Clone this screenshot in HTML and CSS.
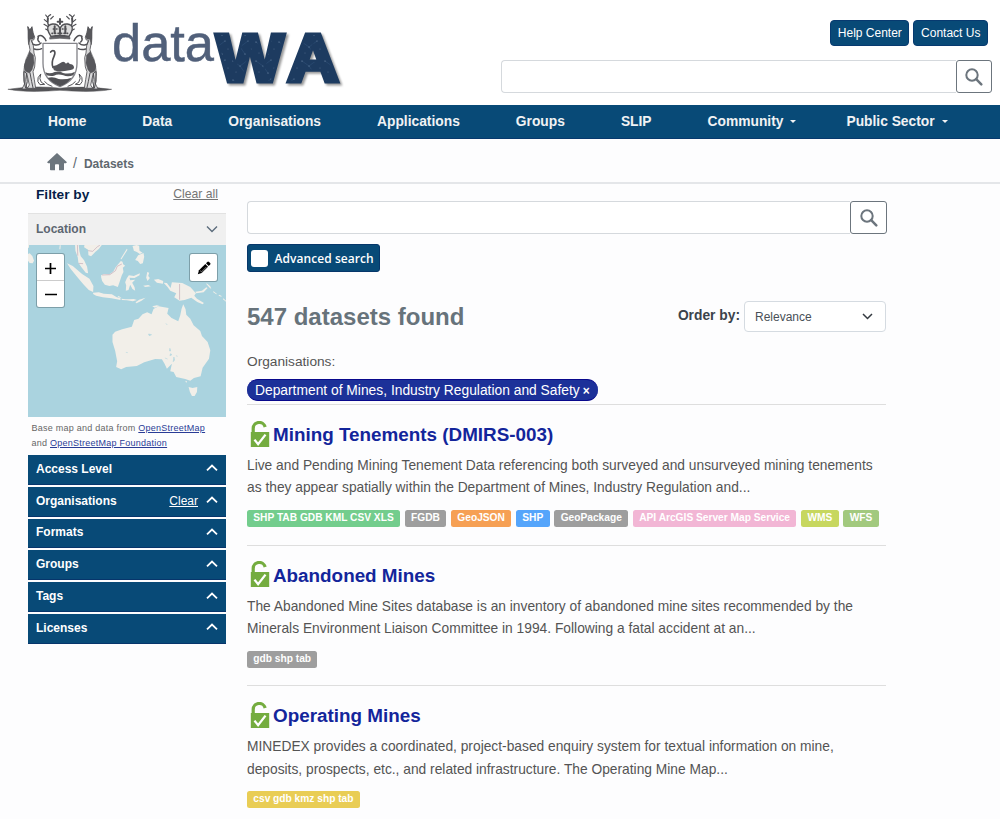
FILE: index.html
```html
<!DOCTYPE html>
<html lang="en">
<head>
<meta charset="utf-8">
<title>Datasets - data WA</title>
<link rel="stylesheet" href="styles.css">
</head>
<body>
<svg class="defs" width="0" height="0" aria-hidden="true">
  <symbol id="search" viewBox="0 0 18 18"><circle cx="7" cy="7" r="5.7" fill="none" stroke="#6c757d" stroke-width="2"/><path d="M11.2 11.2L16.3 16.3" stroke="#6c757d" stroke-width="2.5" stroke-linecap="round"/></symbol>
  <symbol id="up" viewBox="0 0 12 8"><path d="M1 6.3L6 1.6L11 6.3" fill="none" stroke="#fff" stroke-width="1.8"/></symbol>
  <symbol id="lock" viewBox="0 0 20 27"><path d="M3.2 11V7.400A6.100 6.100 0 0 1 15.200 6" fill="none" stroke="#74ac3f" stroke-width="3.2"/><path d="M.8 11h18.400v15H.8z" fill="#74ac3f"/><path d="M4.500 18.600l3.600 4.600 7.400-9.600" fill="none" stroke="#fff" stroke-width="2.300"/></symbol>
</svg>

<header class="header">
  <svg class="logo" width="350" height="105" viewBox="0 0 350 105">
    <defs>
      <pattern id="stars" width="23" height="19" patternUnits="userSpaceOnUse">
        <rect width="23" height="19" fill="#1d3b60"/>
        <path d="M3 4l7 5 8-6M10 9l5 7" stroke="#30537a" stroke-width=".5" fill="none"/>
        <g fill="#7890ad"><circle cx="3" cy="4" r=".6"/><circle cx="10" cy="9" r=".5"/><circle cx="18" cy="3" r=".5"/><circle cx="15" cy="16" r=".6"/><circle cx="6" cy="15" r=".4"/><circle cx="21" cy="11" r=".4"/></g>
      </pattern>
    </defs>
    <g transform="translate(0 5) scale(.3333)" stroke="#505054" fill="none" stroke-linejoin="round" stroke-linecap="round" stroke-width="4">
      <path d="M25 253Q90 243 150 247Q180 252 210 247Q270 243 335 253Q290 262 215 258Q180 254 145 258Q70 262 25 253z" fill="#555558" stroke-width="1.500"/>
      <g id="roo">
        <path d="M84 66l6 10 6-11 3 18 5 14-3 8-7 1 6 16 2 22 4 14-2 28-5 14 4 24 4 26H82l6-10-8-36-3 20 3 28H66l8-16-3-30 3-28 12-24 4-20-4-22 2-17z" fill="#d9d9da" stroke-width="2.500"/>
        <path d="M84 66l5 10 6-9 5 20 3 9-4 6-9 1-4 16-2-18zM89 140l11 10 2 24-6 20-8 10-12-5-3-14 4-20z" fill="#58585c" stroke-width="1.500"/>
        <path d="M73 200l6 4 3 26-5 20-5-20zM90 204l5 26 4 18M95 108l5 12" stroke-width="3"/>
        <path d="M101 118q12 6 22-4M103 132q12 4 22-1M114 94q8-5 15 1t9 12M115 96q-4 9 3 15" stroke-width="4.500"/>
        <path d="M122 208q-6 14 2 24l10 6-14 1q-10-8-6-20zM134 230q8 10 22 14" stroke-width="3"/>
        <path d="M137 30l8 10-1 14M133 44l10 8 5 14M132 58l14 8 7 12M152 29q-10 4-10 16 0 18 14 30M137 72l14 8M160 34l-8 8" stroke-width="3.500"/>
      </g>
      <use href="#roo" transform="translate(360 0) scale(-1 1)"/>
      <path d="M129 115H231V175Q231 225 180 245Q129 225 129 175z" fill="#fff" stroke="#85858a" stroke-width="4"/>
      <path d="M136 202q14 6 28-1 14-4 25 3 20 5 36-4l-5 11q-17 6-30 0-16-5-28 1-10 2-22-1z" fill="#555559" stroke="none"/>
      <path d="M143 219q16-5 33 3 20 3 39-4-10 16-35 26-24-10-37-25z" fill="#505054" stroke="none"/>
      <path d="M152 141q5-7 11-3 4 5-1 16-9 19-3 33" stroke-width="5"/>
      <path d="M157 184q13-2 23-9 11-10 18 1 8-8 11 1 11 0 13 9 1 7-10 9-36 8-50 1z" fill="#55555a" stroke="none"/>
      <path d="M151 95q29-6 58 0l1 7q-30-5-60 0z" fill="#626266" stroke-width="2"/>
      <path d="M153 94q-22-33 5-37 17-1 22 14 5-15 22-14 27 4 5 37-27-5-54 0z" fill="#ddd" stroke-width="4"/>
      <path d="M180 42v15M173 50h14M164 64v21M196 64v21M180 71v16" stroke-width="6"/>
      <path d="M156 85h48M160 72h40" stroke-width="5" stroke-dasharray="2 7"/>
    </g>
    <text class="logo-data" x="112" y="61" textLength="102" lengthAdjust="spacingAndGlyphs">data</text>
    <g class="logo-wa">
      <text x="216.500" y="80.500" textLength="67" lengthAdjust="spacingAndGlyphs">W</text>
      <text x="287.500" y="80.500" textLength="51" lengthAdjust="spacingAndGlyphs">A</text>
    </g>
  </svg>
  <div class="header-right">
    <div class="header-links"><a class="btn">Help Center</a><a class="btn">Contact Us</a></div>
    <div class="search"><div class="field"></div><div class="go"><svg width="18" height="18"><use href="#search"/></svg></div></div>
  </div>
</header>

<nav class="nav">
  <a>Home</a><a>Data</a><a>Organisations</a><a>Applications</a><a>Groups</a><a>SLIP</a><a class="drop">Community</a><a class="drop last">Public Sector</a>
</nav>

<div class="crumbs">
  <svg width="20" height="18" viewBox="0 0 20 18"><path d="M10 0L0 9.200l1.200 1H3V16.500q0 .8.8.8H8V12q0-.8.8-.8h2.400q.8 0 .8.8v5.300h4.200q.8 0 .8-.8v-6.300h1.800l1.200-1z" fill="#6c757d"/></svg>
  <span class="slash">/</span><b>Datasets</b>
</div>

<div class="page">
  <aside class="side">
    <div class="side-head"><b>Filter by</b><a>Clear all</a></div>
    <div class="loc-head"><span>Location</span><svg width="12" height="8" viewBox="0 0 12 8"><path d="M1 1.500L6 6.500L11 1.500" fill="none" stroke="#5c6c7c" stroke-width="1.400"/></svg></div>
    <div class="map">
      <svg width="199" height="172" viewBox="24 179 596 516" preserveAspectRatio="none">
        <g fill="#f2efe9">
          <path d="M24 206l5-2 8 8 5 14-4 8-9-1-5-7z"/>
          <path d="M165 179h11l2 19 4 15 10 12 9 19 3 20-7-2-14-18-8-12-2-16-7-20z"/>
          <path d="M193 179h52l-9 12-10 8-13 14-8-3-1-17-12-7z"/>
          <path d="M141 234l17 8 28 24 22 14 12 22-1 18-13-6-17-18-20-24-17-21z"/>
          <path d="M219 322l17-1 15 4 24 2 15 9 11 3v5l-27-5-26-3-20-5-9-5z"/>
          <path d="M304 340l12 2 11 0 14-1 9 3-12 4-18-3-15-1zM346 351l11-8 19-6-12 9-15 8z"/>
          <path d="M243 270l8-4 17 1 12-9 7-13 15-18 5 2 2 8 6 4-7 6 2 13-5 10-7 21-5 14-14-5-11 2-14-4-8-11-3-11z"/>
          <path d="M320 279l6-9 15 2 18-8-1 6-15 8-15-1 2 8 15-2-9 9 7 13 2 11-8-5-7-13-5 16-8 2 1-16-3-9z"/>
          <path d="M337 182l12-3 8 2 1 15 9 6-8 4-9-6-9-4-2-8zM354 210l16-7 2 11-4 20-8 2-7-9-8-3zM320 190l2 3-18 29-3-1z"/>
          <path d="M381 260l6 2-3 10 5 6-7 9-4-10zM369 301l15-2 8 4-17 2zM401 283l13-2 15 6-1 8-18-3z"/>
          <path d="M430 292l10 1 11 15L455 291L486 293L510 305L527 324L522 331L530 340L551 353L547 357L531 350L513 337L493 344L478 346L462 336L468 324L450 316L442 305z"/>
          <path d="M525 319l20-3 13-10 4 2-12 13-22 3zM559 294l11 9 3 8-5-4-10-11zM580 318l10 8-2 1-10-7zM596 328l8 4-1 2-8-3zM609 339l9 8-1 2-9-7z"/>
          <path d="M489 357L496 372L498 388L510 400L520 420L540 437L545 452L562 470L570 495L566 520L547 547L541 573L521 578L510 586L495 581L468 575L460 560L450 558L455 535L440 550L433 535L425 522L405 521L372 531L350 542L318 545L303 552L288 545L291 528L285 496L277 470L277 448L285 439L306 432L335 424L342 404L355 400L367 387L381 381L394 387L400 371L415 363L445 368L441 385L454 398L474 408L480 390L484 370Z"/>
          <path d="M505 605l12 3 14-3-1 15-7 12-8 0-6-12zM496 586l4 2-1 4-3-2z"/>
          <path d="M24 179h3v8h-3zM119 180l3 0-1 12-3 0zM300 337l-8-2 3-3 9 5zM396 363l14-3 8 2-14 5z"/>
        </g>
        <path d="M478 296l0 47M246 269l23-1 17-12 5-13 14-7M204 196l14 2 14-14 7-4M172 179l1 32M176 234l13 1" fill="none" stroke="#c4a9b6" stroke-width="2"/>
        <path d="M385 446l9 2-7 3zM449 489l2 8-3 0zM451 505l4 3-6 3zM461 515l2 9-4 5zM467 511l5 2M434 518l8 3M317 501l6 1M437 414l4 5" fill="#aad3df" stroke="#b9d9e1" stroke-width="2"/>
      </svg>
      <div class="zoomer"><svg width="27" height="53" viewBox="0 0 27 53"><path d="M13.500 9v11M8 14.500h11M8 40.500h12" stroke="#000" stroke-width="1.700"/><path d="M0 26.500h27" stroke="#ccc"/></svg></div>
      <div class="pencil"><svg width="14" height="14" viewBox="0 0 14 14"><path d="M.8 13.200L2 9.300 8.300 3 11 5.700 4.700 12z"/><path d="M9 2.300l1.600-1.500q.7-.5 1.400.1l1.200 1.200q.6.700 0 1.400L11.700 5z"/><path d="M3.200 9.700l1.300 1.200 5-5" fill="none" stroke="#fff" stroke-width=".5"/></svg></div>
    </div>
    <p class="attrib">Base map and data from <a>OpenStreetMap</a><br>and <a>OpenStreetMap Foundation</a></p>
    <div class="bars">
      <div class="bar"><b>Access Level</b><svg width="12" height="8"><use href="#up"/></svg></div>
      <div class="bar"><b>Organisations</b><a>Clear</a><svg width="12" height="8"><use href="#up"/></svg></div>
      <div class="bar"><b>Formats</b><svg width="12" height="8"><use href="#up"/></svg></div>
      <div class="bar"><b>Groups</b><svg width="12" height="8"><use href="#up"/></svg></div>
      <div class="bar"><b>Tags</b><svg width="12" height="8"><use href="#up"/></svg></div>
      <div class="bar"><b>Licenses</b><svg width="12" height="8"><use href="#up"/></svg></div>
    </div>
  </aside>

  <main class="main">
    <div class="search"><div class="field"></div><div class="go"><svg width="18" height="18"><use href="#search"/></svg></div></div>
    <div class="advanced"><i></i><span>Advanced search</span></div>
    <div class="found">
      <h1>547 datasets found</h1>
      <label>Order by:</label>
      <div class="select"><span>Relevance</span><svg width="11" height="7" viewBox="0 0 11 7"><path d="M1 1l4.500 4.500L10 1" fill="none" stroke="#343a40" stroke-width="1.500"/></svg></div>
    </div>
    <p class="facet">Organisations:</p>
    <div class="pill">Department of Mines, Industry Regulation and Safety<span>×</span></div>

    <article class="item">
      <h2><svg width="20" height="27"><use href="#lock"/></svg><span>Mining Tenements (DMIRS-003)</span></h2>
      <p>Live and Pending Mining Tenement Data referencing both surveyed and unsurveyed mining tenements<br>as they appear spatially within the Department of Mines, Industry Regulation and...</p>
      <div class="tags"><span class="tag green">SHP TAB GDB KML CSV XLS</span><span class="tag grey">FGDB</span><span class="tag orange">GeoJSON</span><span class="tag blue">SHP</span><span class="tag grey">GeoPackage</span><span class="tag pink">API ArcGIS Server Map Service</span><span class="tag lime">WMS</span><span class="tag leaf">WFS</span></div>
    </article>
    <article class="item">
      <h2><svg width="20" height="27"><use href="#lock"/></svg><span>Abandoned Mines</span></h2>
      <p>The Abandoned Mine Sites database is an inventory of abandoned mine sites recommended by the<br>Minerals Environment Liaison Committee in 1994. Following a fatal accident at an...</p>
      <div class="tags"><span class="tag grey">gdb shp tab</span></div>
    </article>
    <article class="item">
      <h2><svg width="20" height="27"><use href="#lock"/></svg><span>Operating Mines</span></h2>
      <p>MINEDEX provides a coordinated, project-based enquiry system for textual information on mine,<br>deposits, prospects, etc., and related infrastructure. The Operating Mine Map...</p>
      <div class="tags"><span class="tag yellow">csv gdb kmz shp tab</span></div>
    </article>
  </main>
</div>
</body>
</html>
```
FILE: styles.css
```css
* { box-sizing: border-box; }
html, body { margin: 0; height: 819px; overflow: hidden; }
body { background: #fdfdfe; font-family: "Liberation Sans", Arial, sans-serif; color: #545454; }
svg { display: block; flex: none; }
p, h1, h2 { margin: 0; }
.defs { position: absolute; }

.header { display: flex; height: 105px; background: #fff; }
.logo-data { font-size: 52px; fill: #51607a; stroke: #51607a; stroke-width: .5px; }
.logo-wa { font-size: 67px; font-weight: 700; fill: url(#stars); stroke: #1d3b60; stroke-width: 5px; filter: drop-shadow(2px 2px 1px #0006); paint-order: stroke; }
.header-right { margin-left: auto; width: 491px; margin-right: 8px; padding-top: 20px; }
.header-links { display: flex; justify-content: flex-end; gap: 4px; padding-right: 4px; }
.btn { height: 26px; padding: 0 6.600px; border: 1px solid #073a70; border-radius: 4px; background: #084a77; line-height: 24px; color: #fff; font-size: 12px; }
.search { display: flex; height: 33px; }
.header .search { margin-top: 14px; }
.field { flex: 1; border: 1px solid #d5d9dd; border-right: 0; border-radius: 4px 0 0 4px; background: #fff; }
.go { width: 36px; display: flex; align-items: center; justify-content: center; border: 1px solid #6c757d; border-radius: 3px; background: #fff; }

.nav { height: 34px; background: #084a77; border-bottom: 1px solid #07396e; display: flex; align-items: center; padding-left: 48px; gap: 56px; color: #f0f2f4; font-size: 13.800px; font-weight: 700; white-space: nowrap; }
.drop::after { content: ""; display: inline-block; margin-left: 7px; vertical-align: 3px; border: 3.500px solid transparent; border-top-color: #f0f2f4; border-bottom: 0; }
.last { margin-left: -6px; }

.crumbs { height: 45px; padding: 2px 0 0 47px; border-bottom: 2px solid #e4e6e9; display: flex; align-items: center; font-size: 12px; color: #5f686f; }
.slash { font-size: 14px; margin: 2px 7px 0 6px; }
.crumbs b { margin-top: 4px; }

.page { display: flex; gap: 21px; padding-left: 28px; }
.side { width: 198px; }
.side-head { height: 29px; padding: 1px 8px 0; display: flex; justify-content: space-between; font-size: 13.700px; line-height: 19px; color: #051d49; }
.side-head a { font-size: 12.200px; line-height: 18px; color: #757575; text-decoration: underline; }
.loc-head { height: 32px; display: flex; align-items: center; justify-content: space-between; padding: 0 8px 2px; background: #f0f0f0; border-top: 1px solid #e2e2e2; font-size: 12px; font-weight: 700; color: #5c6670; }
.map { position: relative; height: 172px; width: 198px; overflow: hidden; background: #aad3df; }
.zoomer, .pencil { position: absolute; background: #fff; border-radius: 2px; box-shadow: 0 0 0 1px #7d9fa9; }
.zoomer { left: 9px; top: 9px; }
.pencil { left: 162px; top: 9px; width: 27px; height: 27px; display: grid; place-items: center; }
.attrib { height: 38px; padding: 4px 0 0 3.500px; font-size: 9px; letter-spacing: .25px; line-height: 14.500px; color: #666; white-space: nowrap; }
.attrib a { color: #2a3c96; text-decoration: underline; }
.bars { display: grid; gap: 2px; }
.bar { height: 29.800px; background: #084a77; border-bottom: 1px solid #07356b; display: flex; align-items: center; padding: 0 8px 2px; gap: 8px; color: #fff; font-size: 12px; }
.bar b { margin-right: auto; padding-top: 1px; }
.bar a { text-decoration: underline; padding-top: 1px; }

.main { width: 639px; padding-top: 17px; }
.main .search { width: 640px; }
.main .go { width: 37px; }
.advanced { margin-top: 10px; width: 133px; height: 28px; border-radius: 3px; background: #084a77; border: 1px solid #06376a; display: flex; align-items: center; padding-left: 3px; gap: 6.500px; color: #fff; font: 600 12px "Open Sans", sans-serif; letter-spacing: .06px; white-space: nowrap; }
.advanced i { width: 17px; height: 17px; border-radius: 3px; background: #fff; }
.found { height: 31px; margin-top: 29px; display: flex; align-items: center; color: #67737b; }
.found h1 { font-size: 24px; line-height: 30px; margin-right: auto; }
.found label { font-size: 13.800px; font-weight: 700; color: #3b434b; margin: -3px 4px 0 0; }
.select { width: 142px; height: 31px; border: 1px solid #d5dbe1; border-radius: 4px; background: #fff; display: flex; align-items: center; justify-content: space-between; padding: 0 12px 0 10px; font-size: 12px; color: #495057; }
.facet { margin-top: 20px; font-size: 13.700px; line-height: 20px; }
.pill { width: 351px; height: 22px; margin-top: 7px; padding-left: 8px; border-radius: 11px; background: #1c3199; border: solid #08088c; border-width: 1px 0; line-height: 20px; font-size: 13.820px; color: #fff; white-space: nowrap; }
.pill span { font-size: 12px; font-weight: 700; margin-left: 3px; }
.item { height: 140.700px; border-top: 1px solid #dedede; padding-top: 15px; }
.pill + .item { margin-top: 3px; }
.item h2 { display: flex; align-items: center; gap: 3px; padding-left: 3px; height: 28px; font-size: 18.850px; color: #13259b; white-space: nowrap; }
.item h2 span { padding-top: 2px; }
.item p { margin-top: 7px; font-size: 13.790px; line-height: 22.400px; white-space: nowrap; }
.tags { display: flex; gap: 4.800px; margin-top: 10px; }
.tag { height: 17px; padding: 0 6.300px; border-radius: 2.500px; line-height: 15px; font-size: 10.200px; font-weight: 700; color: #fff; white-space: nowrap; }
.green { background: #73cd8d; }
.grey { background: #9e9e9e; }
.orange { background: #f6a054; }
.blue { background: #55a5fb; }
.pink { background: #f2b6d5; }
.lime { background: #c7d75f; }
.leaf { background: #a2c97e; }
.yellow { background: #e9cd55; }
```
